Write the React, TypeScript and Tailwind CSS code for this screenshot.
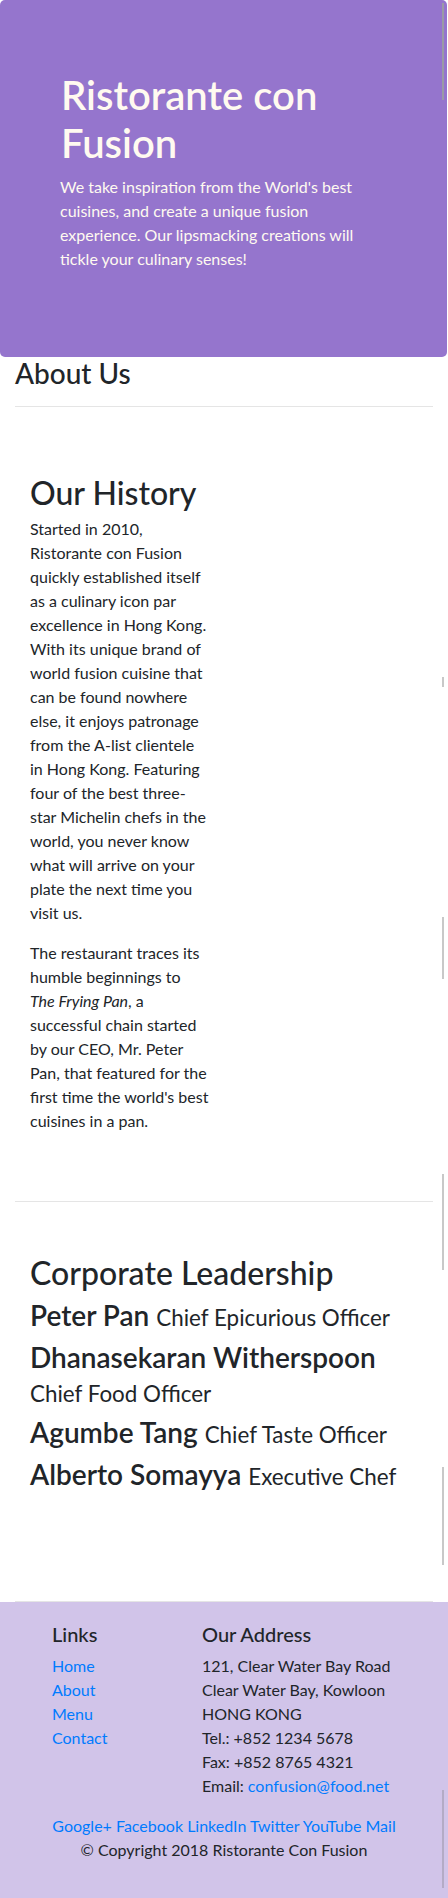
import React from 'react'

const leaders = [
  { name: 'Peter Pan', title: 'Chief Epicurious Officer' },
  { name: 'Dhanasekaran Witherspoon', title: 'Chief Food Officer' },
  { name: 'Agumbe Tang', title: 'Chief Taste Officer' },
  { name: 'Alberto Somayya', title: 'Executive Chef' },
]

const social = ['Google+', 'Facebook', 'LinkedIn', 'Twitter', 'YouTube', 'Mail']

function Jumbotron() {
  return (
    <header className="mr-px h-[357px] rounded-[5px] bg-[#9575cd] pl-[61px] pr-[61px] pt-[71px] text-[#fffaf0]">
      <h1 className="mb-[8px] text-[40px] font-semibold leading-[1.2]">Ristorante con Fusion</h1>
      <p className="-ml-px text-[16px] leading-6">
        We take inspiration from the World's best cuisines, and create a unique fusion experience. Our
        lipsmacking creations will tickle your culinary senses!
      </p>
    </header>
  )
}

function History() {
  return (
    <section className="border-b border-[#e5e5e5] pb-[52px] pt-[51px]">
      <div className="w-[209px] px-[15px]">
        <h2 className="mb-[5px] text-[32px] font-medium leading-[1.2]">Our History</h2>
        <p className="mb-4 text-[16px] leading-6">
          Started in 2010, Ristorante con Fusion quickly established itself as a culinary icon par excellence in
          Hong Kong. With its unique brand of world fusion cuisine that can be found nowhere else, it enjoys
          patronage from the A-list clientele in Hong Kong. Featuring four of the best three-star Michelin chefs in
          the world, you never know what will arrive on your plate the next time you visit us.
        </p>
        <p className="mb-4 text-[16px] leading-6">
          The restaurant traces its humble beginnings to <em>The Frying Pan</em>, a successful chain started by our
          CEO, Mr. Peter Pan, that featured for the first time the world's best cuisines in a pan.
        </p>
      </div>
    </section>
  )
}

function Leadership() {
  return (
    <section className="min-h-[400px] border-b border-[#e5e5e5] px-[15px] pb-[50px] pt-[52px]">
      <h2 className="mb-[7px] text-[32px] font-medium leading-[1.2]">Corporate Leadership</h2>
      {leaders.map(l => (
        <h3 key={l.name} className="mb-2 text-[28px] font-semibold leading-[1.2]">
          {l.name} <small className="text-[22.4px] font-normal">{l.title}</small>
        </h3>
      ))}
    </section>
  )
}

function Footer() {
  return (
    <footer className="bg-[#d1c4e9] pb-5 pt-5">
      <div className="flex">
        <div className="ml-[37px] w-[150px] px-[15px]">
          <h5 className="mb-2 text-[20px] font-medium leading-6">Links</h5>
          <ul className="text-[16px] leading-6 text-[#007bff]">
            <li>Home</li>
            <li>About</li>
            <li>Menu</li>
            <li>Contact</li>
          </ul>
        </div>
        <div className="w-[261px] px-[15px]">
          <h5 className="mb-2 text-[20px] font-medium leading-6">Our Address</h5>
          <address className="mb-4 text-[16px] not-italic leading-6">
            121, Clear Water Bay Road
            <br />
            Clear Water Bay, Kowloon
            <br />
            HONG KONG
            <br />
            Tel.: +852 1234 5678
            <br />
            Fax: +852 8765 4321
            <br />
            Email: <span className="text-[#007bff]">confusion@food.net</span>
          </address>
        </div>
      </div>
      <div className="text-center text-[16px] leading-6 text-[#007bff]">
        {social.map((s, i) => (
          <span key={s}>
            {i > 0 && ' '}
            {s}
          </span>
        ))}
      </div>
      <p className="mb-4 text-center text-[16px] leading-6">© Copyright 2018 Ristorante Con Fusion</p>
    </footer>
  )
}

export default function App() {
  return (
    <div className="relative bg-white font-['Lato',sans-serif] text-[#212529]">
      <Jumbotron />
      <div className="px-[15px]">
        <h3 className="text-[28px] font-medium leading-[1.2]">About Us</h3>
        <hr className="mb-4 mt-[15px] border-[#e5e5e5]" />
        <History />
        <Leadership />
      </div>
      <Footer />

      {/* leftover scrollbar thumbs from the capture */}
      <div className="absolute right-[4px] top-[3px] h-[97px] w-[2px] bg-[#9b9ba6]" />
      <div className="absolute right-[4px] top-[677px] h-[10px] w-[2px] bg-[#c8c8c8]" />
      <div className="absolute right-[4px] top-[917px] h-[62px] w-[2px] bg-[#c8c8c8]" />
      <div className="absolute right-[4px] top-[1174px] h-[96px] w-[2px] bg-[#c8c8c8]" />
      <div className="absolute right-[4px] top-[1467px] h-[98px] w-[2px] bg-[#c8c8c8]" />
      <div className="absolute right-[4px] top-[1790px] h-[98px] w-[2px] bg-[#b4abc6]" />
    </div>
  )
}
